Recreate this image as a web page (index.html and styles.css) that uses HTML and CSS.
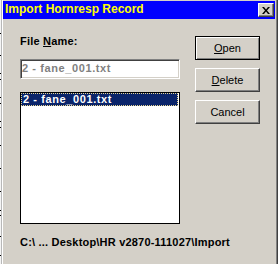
FILE: index.html
```html
<!DOCTYPE html>
<html lang="en">
<head>
  <meta charset="UTF-8">
  <meta name="viewport" content="width=device-width, initial-scale=1.0">
  <title>Import Hornresp Record</title>
  <link rel="stylesheet" href="styles.css">
</head>
<body>
  <div class="screen">
    <div class="backdrop"></div>
    <div class="dialog">
      <div class="titlebar">
        <span class="title">Import Hornresp Record</span>
        <span class="close">
          <svg width="8" height="7" viewBox="0 0 8 7">
            <path d="M0 0h2l2 2.4L6 0h2L5 3.5 8 7H6L4 4.6 2 7H0l3-3.5z" fill="#000"/>
          </svg>
        </span>
      </div>
      <div class="content">
        <div class="main">
          <div class="left">
            <div class="label">File <u>N</u>ame:</div>
            <div class="edit">2 - fane_001.txt</div>
            <div class="listbox">
              <div class="item selected">2 - fane_001.txt</div>
            </div>
          </div>
          <div class="buttons">
            <div class="btn default"><u>O</u>pen</div>
            <div class="btn"><u>D</u>elete</div>
            <div class="btn">Cancel</div>
          </div>
        </div>
        <div class="path">C:\ ... Desktop\HR v2870-111027\Import</div>
      </div>
    </div>
  </div>
</body>
</html>
```

FILE: styles.css
```css
/* General */
body {
  margin: 0;
  font-family: "Liberation Sans", Arial, sans-serif;
  font-size: 11px;
  background: #d4d0c8;
  color: #000;
}

.screen {
  display: flex;
  width: 278px;
  height: 264px;
  overflow: hidden;
}

/* Window behind the dialog */
.backdrop {
  width: 1px;
  border-right: 1px solid #b8b8b8;
  background:
    linear-gradient(#000, #000) 0 33px / 1px 1px no-repeat,
    linear-gradient(#000, #000) 0 55px / 1px 1px no-repeat,
    linear-gradient(#000, #000) 0 73px / 1px 1px no-repeat,
    linear-gradient(#000, #000) 0 79px / 1px 1px no-repeat,
    linear-gradient(#000, #000) 0 97px / 1px 1px no-repeat,
    linear-gradient(#000, #000) 0 103px / 1px 1px no-repeat,
    linear-gradient(#000, #000) 0 121px / 1px 1px no-repeat,
    linear-gradient(#000, #000) 0 127px / 1px 1px no-repeat,
    linear-gradient(#000, #000) 0 145px / 1px 1px no-repeat,
    linear-gradient(#000, #000) 0 168px / 1px 1px no-repeat,
    linear-gradient(#000, #000) 0 191px / 1px 1px no-repeat,
    linear-gradient(#000, #000) 0 210px / 1px 1px no-repeat,
    linear-gradient(#000, #000) 0 215px / 1px 1px no-repeat,
    linear-gradient(#000, #000) 0 236px / 1px 1px no-repeat,
    linear-gradient(#000, #000) 0 255px / 1px 1px no-repeat,
    #f4f4f4;
}

/* Dialog frame */
.dialog {
  flex: 1;
  background: #d4d0c8;
  border-left: 1px solid #fff;
  border-right: 1px solid #404040;
  box-shadow: inset -1px 0 #808080;
  padding: 1px 2px 0 0;
}

.titlebar {
  display: flex;
  align-items: flex-start;
  height: 18px;
  background: #0000ff;
  padding: 0 1px 0 2px;
}

.title {
  flex: 1;
  padding-top: 1px;
  font-size: 12px;
  font-weight: bold;
  line-height: 14px;
  color: #ffff00;
}

.close {
  display: flex;
  justify-content: center;
  align-items: center;
  box-sizing: border-box;
  width: 16px;
  height: 14px;
  margin-top: 2px;
  background: #d4d0c8;
  border-top: 1px solid #fff;
  border-left: 1px solid #fff;
  border-right: 1px solid #404040;
  border-bottom: 1px solid #404040;
  box-shadow: inset -1px -1px #808080;
}

/* Body */
.content {
  padding: 16px 0 0 17px;
  font-weight: bold;
  letter-spacing: 0.2px;
}

.main {
  display: flex;
}

.left {
  width: 160px;
}

.label {
  line-height: 13px;
}

.edit {
  box-sizing: border-box;
  height: 20px;
  margin-top: 11px;
  padding: 1px;
  line-height: 14px;
  letter-spacing: 0.6px;
  color: #808080;
  background: #fff;
  border-top: 1px solid #808080;
  border-left: 1px solid #808080;
  border-right: 1px solid #fff;
  border-bottom: 1px solid #fff;
  box-shadow: inset 1px 1px #404040, inset -1px -1px #d4d0c8;
}

.listbox {
  box-sizing: border-box;
  height: 132px;
  margin-top: 13px;
  padding-right: 1px;
  background: #fff;
  border: 1px solid #000;
}

.item {
  box-sizing: border-box;
  height: 13px;
  padding-left: 1px;
  line-height: 11px;
  letter-spacing: 0.6px;
}

.item.selected {
  background: #0a246a;
  color: #fff;
  border: 1px dotted #e8d690;
}

/* Buttons */
.buttons {
  display: flex;
  flex-direction: column;
  gap: 8px;
  margin: 1px 0 0 15px;
}

.btn {
  display: flex;
  justify-content: center;
  align-items: center;
  box-sizing: border-box;
  width: 65px;
  height: 24px;
  font-weight: normal;
  letter-spacing: 0;
  line-height: 13px;
  border-top: 1px solid #fff;
  border-left: 1px solid #fff;
  border-right: 1px solid #404040;
  border-bottom: 1px solid #404040;
  box-shadow: inset -1px -1px #808080;
}

.btn.default {
  border: 1px solid #000;
  box-shadow: inset 1px 1px #fff, inset -1px -1px #808080;
}

.path {
  margin-top: 12px;
  line-height: 13px;
}
```
